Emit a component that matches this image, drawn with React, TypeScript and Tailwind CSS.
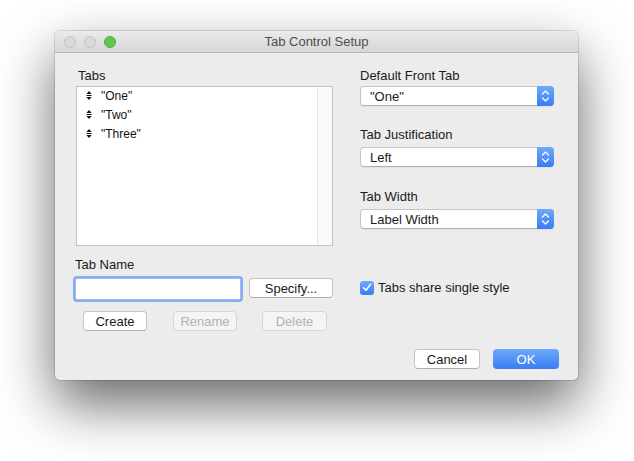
import React from "react";

const font = { fontFamily: '"Liberation Sans", Arial, Helvetica, sans-serif' };

function ItemIcon() {
  return (
    <svg width="6" height="9" viewBox="0 0 6 9" className="shrink-0">
      <path d="M3 0 L5.6 3 H0.4 Z" fill="#111" />
      <rect x="0.5" y="4" width="5" height="1" fill="#111" />
      <path d="M0.4 6 H5.6 L3 9 Z" fill="#111" />
    </svg>
  );
}

function Popup({ label, width = "w-[194px]" }: { label: string; width?: string }) {
  return (
    <div
      className={`flex h-[20px] ${width} items-stretch rounded-[4px] border border-[#c6c6c6] border-b-[#b0b0b0] bg-white shadow-[0_1px_0_rgba(0,0,0,0.04)]`}
    >
      <div className="flex flex-1 items-center pl-[9px] pt-[1px] text-[13px] leading-none text-[#1a1a1a]">{label}</div>
      <div className="-my-px -mr-px flex w-[17px] items-center justify-center rounded-r-[4px] bg-gradient-to-b from-[#6eaafa] to-[#3a7cf4]">
        <svg width="9" height="14" viewBox="0 0 9 14">
          <path d="M1.5 5 L4.5 2 L7.5 5" stroke="white" strokeWidth="1.3" fill="none" strokeLinecap="round" strokeLinejoin="round" />
          <path d="M1.5 9 L4.5 12 L7.5 9" stroke="white" strokeWidth="1.3" fill="none" strokeLinecap="round" strokeLinejoin="round" />
        </svg>
      </div>
    </div>
  );
}

function Button({ children, className = "", disabled = false }: { children: React.ReactNode; className?: string; disabled?: boolean }) {
  return (
    <div
      className={`flex h-[20px] items-center justify-center rounded-[4px] border text-[13px] leading-none ${
        disabled
          ? "border-[#d6d6d6] bg-[#f4f4f4] text-[#b3b3b3]"
          : "border-[#c4c4c4] border-b-[#aeaeae] bg-white text-[#1a1a1a]"
      } ${className}`}
    >
      {children}
    </div>
  );
}

export default function App() {
  return (
    <div className="min-h-[461px] w-[634px] bg-white pl-[55px] pt-[31px]" style={font}>
      <div className="flex h-[349px] w-[523px] flex-col overflow-hidden rounded-[5px] bg-[#ececec] shadow-[0_24px_55px_rgba(0,0,0,0.6),0_0_0_1px_rgba(0,0,0,0.12)]">
        {/* Title bar */}
        <div className="relative flex h-[22px] shrink-0 items-center border-b border-[#b9b9b9] bg-gradient-to-b from-[#ebebeb] to-[#d6d6d6] pl-[9px]">
          <div className="flex gap-[8px]">
            <div className="h-[12px] w-[12px] rounded-full border border-[#c4c4c4] bg-[#d9d9d9]" />
            <div className="h-[12px] w-[12px] rounded-full border border-[#c4c4c4] bg-[#d9d9d9]" />
            <div className="h-[12px] w-[12px] rounded-full border border-[#52ad3e] bg-[#62c653]" />
          </div>
          <div className="absolute inset-0 flex items-center justify-center pt-[1px] text-[13px] text-[#4d4d4d]">Tab Control Setup</div>
        </div>

        {/* Body */}
        <div className="flex flex-1 flex-col">
          <div className="flex pt-[15px]">
            {/* Left column */}
            <div className="flex w-[286px] flex-col pl-[20px]">
              <div className="pl-[3px] text-[13px] leading-[16px] text-[#1a1a1a]">Tabs</div>
              <div className="ml-px mt-[2px] flex h-[160px] w-[257px] border border-[#c2c2c2] bg-white">
                <div className="-mt-px flex flex-1 flex-col">
                  {['"One"', '"Two"', '"Three"'].map((t) => (
                    <div key={t} className="flex h-[19px] items-center pl-[9px] text-[12px] text-[#111]">
                      <ItemIcon />
                      <span className="ml-[9px]">{t}</span>
                    </div>
                  ))}
                </div>
                <div className="w-[15px] border-l border-[#e6e6e6] bg-[#fafafa]" />
              </div>
              <div className="mt-[11px] text-[13px] leading-[16px] text-[#1a1a1a]">Tab Name</div>
              <div className="mt-[5px] flex items-start">
                <div className="h-[22px] w-[166px] rounded-[2px] border border-[#9dbcf0] bg-white shadow-[0_0_0_2px_#87acef]" />
                <Button className="ml-[8px] w-[84px]">Specify...</Button>
              </div>
              <div className="mt-[11px] flex">
                <Button className="ml-[8px] w-[64px]">Create</Button>
                <Button className="ml-[26px] w-[64px]" disabled>
                  Rename
                </Button>
                <Button className="ml-[25px] w-[65px]" disabled>
                  Delete
                </Button>
              </div>
            </div>

            {/* Right column */}
            <div className="flex flex-col pl-[19px]">
              <div className="text-[13px] leading-[16px] text-[#1a1a1a]">Default Front Tab</div>
              <div className="mt-[2px]">
                <Popup label={'"One"'} />
              </div>
              <div className="mt-[21px] text-[13px] leading-[16px] text-[#1a1a1a]">Tab Justification</div>
              <div className="mt-[4px]">
                <Popup label="Left" />
              </div>
              <div className="mt-[22px] text-[13px] leading-[16px] text-[#1a1a1a]">Tab Width</div>
              <div className="mt-[4px]">
                <Popup label="Label Width" />
              </div>
              <div className="mt-[50px] flex items-center">
                <div className="flex h-[14px] w-[14px] items-center justify-center rounded-[3px] bg-gradient-to-b from-[#6eaafa] to-[#3a7cf4]">
                  <svg width="10" height="9" viewBox="0 0 10 9">
                    <path d="M1.5 4.8 L4 7.3 L8.6 1.2" stroke="white" strokeWidth="1.5" fill="none" strokeLinecap="round" strokeLinejoin="round" />
                  </svg>
                </div>
                <span className="ml-[4px] pt-[1px] text-[13px] leading-[16px] text-[#1a1a1a]">Tabs share single style</span>
              </div>
            </div>
          </div>

          {/* Footer */}
          <div className="mt-auto flex justify-end gap-[13px] pb-[11px] pr-[19px]">
            <Button className="w-[66px]">Cancel</Button>
            <div className="flex h-[20px] w-[66px] items-center justify-center rounded-[4px] bg-gradient-to-b from-[#6eaafa] to-[#3a7cf4] text-[13px] leading-none text-white">
              OK
            </div>
          </div>
        </div>
      </div>
    </div>
  );
}
